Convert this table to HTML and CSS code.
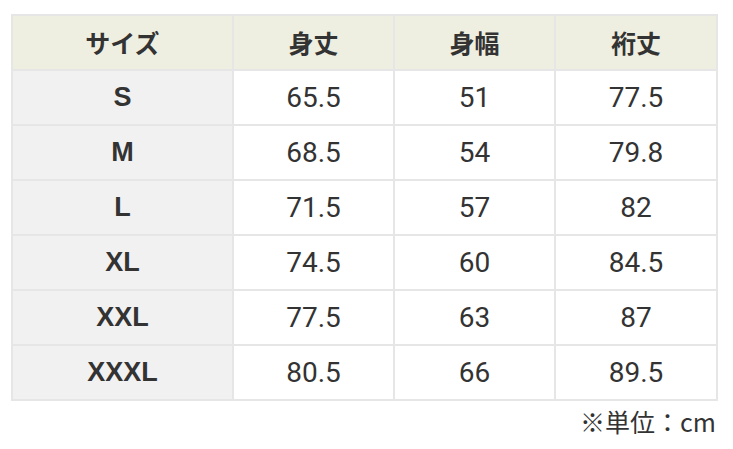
FILE: index.html
```html
<!DOCTYPE html>
<html lang="ja">
<head>
<meta charset="utf-8">
<link rel="stylesheet" href="styles.css">
</head>
<body>
<div class="wrap">
  <table class="size-table">
    <colgroup>
      <col class="c1"><col class="c2"><col class="c3"><col class="c4">
    </colgroup>
    <thead>
      <tr><th>サイズ</th><th>身丈</th><th>身幅</th><th>裄丈</th></tr>
    </thead>
    <tbody>
      <tr><th>S</th><td>65.5</td><td>51</td><td>77.5</td></tr>
      <tr><th>M</th><td>68.5</td><td>54</td><td>79.8</td></tr>
      <tr><th>L</th><td>71.5</td><td>57</td><td>82</td></tr>
      <tr><th>XL</th><td>74.5</td><td>60</td><td>84.5</td></tr>
      <tr><th>XXL</th><td>77.5</td><td>63</td><td>87</td></tr>
      <tr><th>XXXL</th><td>80.5</td><td>66</td><td>89.5</td></tr>
    </tbody>
  </table>
  <p class="note">※単位：cm</p>
</div>
</body>
</html>
```
FILE: styles.css
```css
html, body {
  margin: 0;
  padding: 0;
  background: #ffffff;
}
.wrap {
  padding: 14px 0 0 11px;
  width: 705px;
  font-family: "Noto Sans CJK JP", "Noto Sans", sans-serif;
  color: #333333;
}
.size-table {
  border-collapse: collapse;
  table-layout: fixed;
  width: 705px;
  border: 2px solid #e6e6e6;
}
.c1 { width: 221px; }
.c2 { width: 161px; }
.c3 { width: 161px; }
.c4 { width: 162px; }
.size-table th,
.size-table td {
  border: 2px solid #e6e6e6;
  text-align: center;
  vertical-align: middle;
  padding: 0;
  height: 53px;
}
.size-table thead th {
  background: #efefe1;
  font-size: 25px;
  line-height: 30px;
  font-weight: 700;
  font-family: "Noto Sans CJK JP", sans-serif;
  height: 52.6px;
}
.size-table tbody th {
  background: #f1f1f1;
  font-family: "Liberation Sans", Arial, sans-serif;
  font-weight: 700;
  font-size: 27px;
}
.size-table td {
  background: #ffffff;
  font-family: Roboto, "Noto Sans", sans-serif;
  font-size: 28px;
  font-weight: 400;
}
.note {
  margin: 3px 0 0 0;
  text-align: right;
  font-size: 25px;
  line-height: 34px;
  font-family: "Noto Sans CJK JP", sans-serif;
}
```
